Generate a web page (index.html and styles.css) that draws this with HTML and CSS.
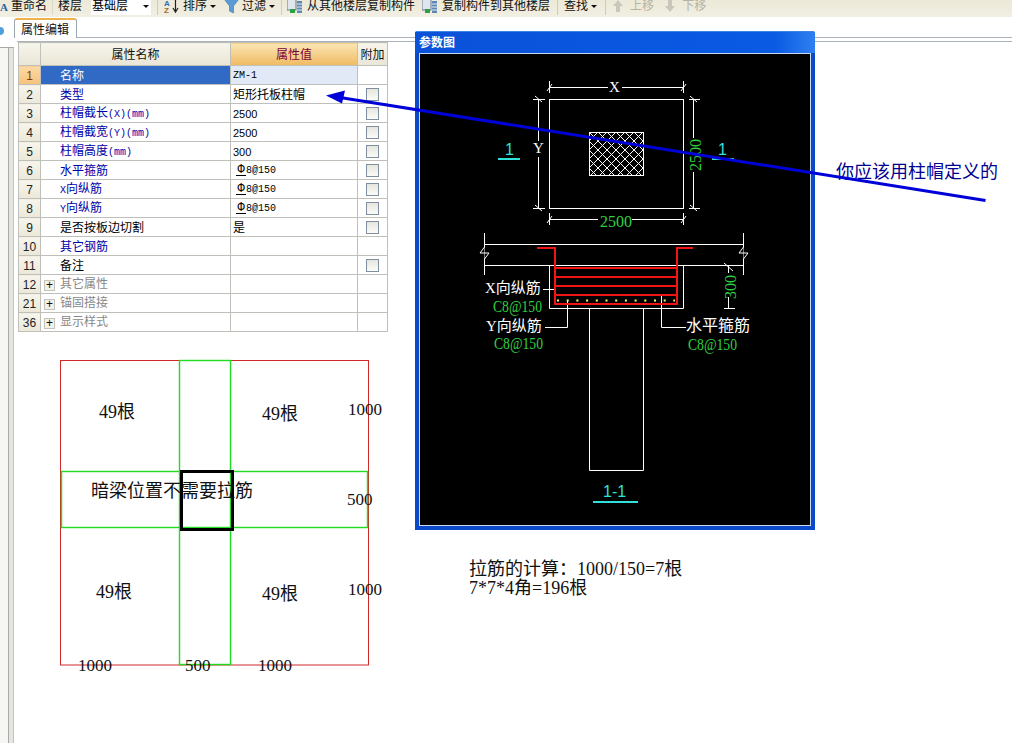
FILE: index.html
```html
<!DOCTYPE html>
<html lang="zh">
<head>
<meta charset="utf-8">
<title>属性编辑</title>
<link rel="stylesheet" href="styles.css">
</head>
<body>
<div class="toolbar">
  <svg class="ico ico-rename" width="10" height="14" viewBox="0 0 10 14"><text x="0" y="12" class="ico-a">A</text></svg>
  <span class="tb tb-rename">重命名</span>
  <span class="sep sep-a"></span>
  <span class="tb">楼层</span>
  <span class="combo"><span>基础层</span><i class="caret"></i></span>
  <span class="sep"></span>
  <svg class="ico" width="17" height="20" viewBox="0 0 17 20"><text x="1" y="10" class="ico-az az-blue">A</text><text x="1" y="17" class="ico-az az-brown">Z</text><path d="M12.500 3V15M10 12L12.500 16L15 12" fill="none" stroke="#222" stroke-width="1.200"/></svg>
  <span class="tb">排序</span><i class="caret"></i>
  <svg class="ico ico-filter" width="15" height="16" viewBox="0 0 15 16"><path d="M0 1H15L9.500 8V15L5.500 13V8Z" fill="#5b9bd5" stroke="#3d74ad" stroke-width=".6"/></svg>
  <span class="tb">过滤</span><i class="caret"></i>
  <span class="sep sep-c"></span>
  <svg class="ico ico-copy" width="16" height="16" viewBox="0 0 16 16"><rect x="0" y="1" width="9" height="11" fill="#dfe6ee" stroke="#66788c"/><rect x="10" y="3" width="5" height="12" fill="#5f86b5"/><path d="M10 6H15M10 9H15M10 12H15" stroke="#e8eef5"/><rect x="3" y="11" width="5" height="4" fill="#2f9e44"/></svg>
  <span class="tb">从其他楼层复制构件</span>
  <svg class="ico ico-copy ico-copy2" width="16" height="16" viewBox="0 0 16 16"><rect x="0" y="1" width="9" height="11" fill="#dfe6ee" stroke="#66788c"/><rect x="10" y="3" width="5" height="12" fill="#5f86b5"/><path d="M10 6H15M10 9H15M10 12H15" stroke="#e8eef5"/><rect x="3" y="11" width="5" height="4" fill="#2f9e44"/></svg>
  <span class="tb">复制构件到其他楼层</span>
  <span class="sep"></span>
  <span class="tb tb-find">查找</span><i class="caret"></i>
  <span class="sep sep-d"></span>
  <svg class="ico ico-up" width="10" height="12" viewBox="0 0 10 12"><path d="M5 0L10 6H7V12H3V6H0Z" fill="#c9c7bb"/></svg>
  <span class="tb tb-off">上移</span>
  <svg class="ico ico-down" width="10" height="12" viewBox="0 0 10 12"><path d="M5 12L10 6H7V0H3V6H0Z" fill="#c9c7bb"/></svg>
  <span class="tb tb-off">下移</span>
</div>

<div class="main">
  <div class="rail">
    <div class="rail-top"><span class="rail-dot"></span></div>
    <div class="rail-body"></div>
  </div>
  <div class="panel">
    <div class="tabs"><span class="tab">属性编辑</span></div>
    <div class="panel-gap"></div>
    <table class="props">
      <colgroup><col class="c-no"><col class="c-name"><col class="c-val"><col class="c-add"></colgroup>
      <thead>
        <tr><th></th><th>属性名称</th><th class="th-val">属性值</th><th>附加</th></tr>
      </thead>
      <tbody>
        <tr class="sel"><td class="no">1</td><td class="name">名称</td><td class="val mono">ZM-1</td><td></td></tr>
        <tr><td class="no">2</td><td class="name blue">类型</td><td class="val">矩形托板柱帽</td><td><span class="check"></span></td></tr>
        <tr><td class="no">3</td><td class="name blue">柱帽截长<span class="lat">(X)(mm)</span></td><td class="val num">2500</td><td><span class="check"></span></td></tr>
        <tr><td class="no">4</td><td class="name blue">柱帽截宽<span class="lat">(Y)(mm)</span></td><td class="val num">2500</td><td><span class="check"></span></td></tr>
        <tr><td class="no">5</td><td class="name blue">柱帽高度<span class="lat">(mm)</span></td><td class="val num">300</td><td><span class="check"></span></td></tr>
        <tr><td class="no">6</td><td class="name blue">水平箍筋</td><td class="val rebar"><span class="bar">Φ</span>8@150</td><td><span class="check"></span></td></tr>
        <tr><td class="no">7</td><td class="name blue"><span class="lat">X</span>向纵筋</td><td class="val rebar"><span class="bar">Φ</span>8@150</td><td><span class="check"></span></td></tr>
        <tr><td class="no">8</td><td class="name blue"><span class="lat">Y</span>向纵筋</td><td class="val rebar"><span class="bar">Φ</span>8@150</td><td><span class="check"></span></td></tr>
        <tr><td class="no">9</td><td class="name">是否按板边切割</td><td class="val">是</td><td><span class="check"></span></td></tr>
        <tr><td class="no">10</td><td class="name blue">其它钢筋</td><td class="val"></td><td></td></tr>
        <tr><td class="no">11</td><td class="name">备注</td><td class="val"></td><td><span class="check"></span></td></tr>
        <tr><td class="no">12</td><td class="name group"><span class="plus">+</span>其它属性</td><td class="val"></td><td></td></tr>
        <tr><td class="no">21</td><td class="name group"><span class="plus">+</span>锚固搭接</td><td class="val"></td><td></td></tr>
        <tr><td class="no">36</td><td class="name group"><span class="plus">+</span>显示样式</td><td class="val"></td><td></td></tr>
      </tbody>
    </table>
  </div>
</div>

<svg class="plan" width="350" height="330" viewBox="40 350 350 330">
  <rect x="60.500" y="360.500" width="308" height="304.500" fill="none" stroke="#d02828"/>
  <rect x="179.500" y="360.500" width="51" height="304" fill="none" stroke="#20dc20" stroke-width="1.400"/>
  <rect x="61.500" y="471.500" width="306" height="56" fill="none" stroke="#20dc20" stroke-width="1.400"/>
  <rect x="181.500" y="471.500" width="51" height="58" fill="none" stroke="#000" stroke-width="3"/>
  <text class="pt" x="99" y="418">49根</text>
  <text class="pt" x="262" y="420">49根</text>
  <text class="pt" x="96" y="598">49根</text>
  <text class="pt" x="262" y="600">49根</text>
  <text class="pt" x="91" y="497">暗梁位置不需要拉筋</text>
  <text class="pn" x="348" y="415">1000</text>
  <text class="pn" x="347" y="505">500</text>
  <text class="pn" x="348" y="595">1000</text>
  <text class="pn" x="78" y="671">1000</text>
  <text class="pn" x="185" y="671">500</text>
  <text class="pn" x="258" y="671">1000</text>
</svg>

<div class="window">
  <div class="win-title">参数图</div>
  <div class="win-body">
    <svg class="cad" width="390" height="472" viewBox="420 53 390 472">
      <defs>
        <pattern id="hatch" x="589" y="131" width="9" height="9" patternUnits="userSpaceOnUse">
          <path d="M0 0L9 9M9 0L0 9" stroke="#fff" stroke-width="1"/>
        </pattern>
      </defs>
      <g fill="none" stroke="#fff">
        <rect x="549.500" y="98.500" width="134" height="109"/>
        <rect x="589.500" y="131.500" width="54" height="43" fill="url(#hatch)"/>
        <path d="M549.500 86.500H608M622 86.500H683.500M549.500 80V92M683.500 80V92M547 90L552 83M681 90L686 83"/>
        <path d="M538.500 98.500V140M538.500 156V207.500M533 98.500H545M533 207.500H545M535 95L542 101M535 204L542 210"/>
        <path d="M693.500 98.500V137M693.500 171V207.500M689 98.500H700M689 207.500H700M690 95L697 101M690 204L697 210"/>
        <path d="M549.500 218.500H598M632 218.500H683.500M549.500 212V224M683.500 212V224M547 222L552 215M681 222L686 215"/>
        <path d="M484.500 232V274M743.500 232V274M484 243.500H744M484 264.500H744"/>
        <path d="M484.500 246L480 252L489 252L484.500 258M743.500 246L739 252L748 252L743.500 258" fill="#000"/>
        <path d="M549.500 264.500V307.500H683.500V264.500M589.500 307.500V469.500H643.500V307.500"/>
        <path d="M543 288.500H555M545 326.500H567.500V299M661.500 293V326.500H686"/>
        <path d="M728.500 264.500V272M728.500 296V307.500M724 307.500H735M724 262L733 270"/>
      </g>
      <g fill="none" stroke="#f01414" stroke-width="2">
        <path d="M537 247H555V303H677V247H693"/>
        <path d="M555 267H677M555 276H677M555 285H677M555 294H677"/>
      </g>
      <path d="M557 299.500H675" stroke="#ffff66" stroke-width="2" stroke-dasharray="2 7.700" fill="none"/>
      <g fill="none" stroke="#30e0d8" stroke-width="2">
        <path d="M498 158H520M712 158H734M593 501H638"/>
      </g>
      <text class="cw" x="609" y="91">X</text>
      <text class="cw" x="533" y="152">Y</text>
      <text class="cc" x="505" y="154">1</text>
      <text class="cc" x="718" y="154">1</text>
      <text class="cg" x="600" y="226">2500</text>
      <text class="cg" transform="translate(701 170) rotate(-90)" x="0" y="0">2500</text>
      <text class="cg" transform="translate(736 298) rotate(-90)" x="0" y="0">300</text>
      <text class="cl" x="485" y="292">X向纵筋</text>
      <text class="cg" x="493" y="311" textLength="49" lengthAdjust="spacingAndGlyphs">C8@150</text>
      <text class="cl" x="486" y="330">Y向纵筋</text>
      <text class="cg" x="494" y="348" textLength="49" lengthAdjust="spacingAndGlyphs">C8@150</text>
      <text class="cl-b" x="686" y="330">水平箍筋</text>
      <text class="cg" x="688" y="349" textLength="49" lengthAdjust="spacingAndGlyphs">C8@150</text>
      <text class="cc" x="603" y="496">1-1</text>
    </svg>
  </div>
</div>

<div class="calc">
  <div>拉筋的计算&#xFF1A;1000/150=7根</div>
  <div>7*7*4角=196根</div>
</div>

<div class="note">你应该用柱帽定义的</div>

<svg class="arrow" width="1012" height="743" viewBox="0 0 1012 743">
  <path d="M340 97.500L985.500 200.500" stroke="#0000d8" stroke-width="3" fill="none"/>
  <path d="M326 95.500L345 90.500L342 103.500Z" fill="#0000d8"/>
</svg>
</body>
</html>
```
FILE: styles.css
```css
* { box-sizing: border-box; }
html, body { margin: 0; padding: 0; }
body {
  position: relative;
  width: 1012px;
  height: 743px;
  overflow: hidden;
  background: #fff;
  color: #000;
  font: 12px "Liberation Sans", "Noto Sans CJK SC", sans-serif;
}

/* toolbar */
.toolbar {
  display: flex;
  align-items: center;
  height: 17px;
  padding-bottom: 5px;
  overflow: hidden;
  background: linear-gradient(#ece9d8, #f1efe2);
  white-space: nowrap;
  line-height: 12px;
}
.tb { flex: none; color: #111; }
.tb-rename { margin-left: 1px; }
.tb-find { margin-left: 1px; }
.tb-off { color: #b5b3a6; margin-left: 7px; }
.sep { flex: none; width: 1px; height: 17px; margin: 0 5px 0 7px; background: #cfccb8; }
.sep-a { margin: 0 5px; background: #ddd9c6; }
.sep-c { margin-left: 0; }
.sep-d { margin-left: 2px; }
.combo {
  display: flex;
  align-items: center;
  justify-content: space-between;
  width: 60px;
  height: 17px;
  margin-left: 9px;
  padding-left: 1px;
  background: #fff;
  flex: none;
}
.combo .caret { margin-right: 2px; }
.combo + .sep { margin-left: 6px; }
.caret {
  flex: none;
  width: 0;
  height: 0;
  margin: 0 6px 0 3px;
  border: 3px solid transparent;
  border-top: 3px solid #111;
  border-bottom: 0;
}
.ico { flex: none; margin-right: 3px; }
.ico-rename { margin-right: 0; }
.ico-filter { margin-left: 2px; }
.ico-copy { margin-right: 4px; }
.ico-copy2 { margin-left: 7px; }
.ico-up { margin-left: 2px; margin-right: 0; }
.ico-down { margin-left: 11px; margin-right: 0; }
.ico-a { font: bold 11px "Liberation Serif", serif; fill: #2b5fa8; }
.ico-az { font: bold 8px "Liberation Sans", sans-serif; }
.az-blue { fill: #3a6cb5; }
.az-brown { fill: #a5692c; }

/* main */
.main { display: flex; height: 726px; }
.rail { flex: none; width: 14px; display: flex; flex-direction: column; }
.rail-top { height: 30px; padding: 9px 0 0; }
.rail-dot {
  display: block;
  width: 4px;
  height: 8px;
  margin-top: 1px;
  border-radius: 0 4px 4px 0;
  background: #4e9fd8;
}
.rail-body {
  flex: 1;
  border-top: 1px solid #a8a8a0;
  background: linear-gradient(90deg, #f6f6f4 8px, #a8aaa4 8px, #a8aaa4 9px, #e6e6e0 9px, #e6e6e0 13px, #c4c4bc 13px);
}
.panel { flex: 1; min-width: 0; }
.tabs {
  display: flex;
  align-items: flex-end;
  height: 21px;
  padding-top: 1px;
  border-bottom: 1px solid #a9b2ba;
  position: relative;
}
.tab {
  display: block;
  width: 63px;
  height: 20px;
  margin-bottom: -1px;
  padding: 2px 0 0 6px;
  line-height: 16px;
  background: #fff;
  border: 1px solid #9aa5b0;
  border-top: 2px solid #eeb24c;
  border-bottom: 0;
  border-radius: 3px 3px 0 0;
  color: #111;
}
.panel-gap { height: 4px; border-bottom: 1px solid #a9b2ba; margin-left: 3px; }

/* table */
.props {
  margin-left: 4px;
  border-collapse: collapse;
  table-layout: fixed;
  width: 369px;
}
.c-no { width: 22px; }
.c-name { width: 190px; }
.c-val { width: 127px; }
.c-add { width: 30px; }
.props th, .props td {
  height: 19px;
  padding: 1px 0 0;
  border: 1px solid #c0c0ba;
  font-weight: 400;
  line-height: 12px;
  overflow: hidden;
  white-space: nowrap;
}
.props th {
  height: 23px;
  text-align: center;
  color: #111;
  background: linear-gradient(#f7f5ec, #e9e6d6);
}
.props th.th-val {
  color: #7a0038;
  background: linear-gradient(#fbe6b4, #f0ba62);
}
.no {
  text-align: center;
  color: #222;
  background: linear-gradient(#f7f5ec, #ebe8d9);
}
.props .name { padding-left: 19px; }
.blue { color: #0000a8; }
.lat { font: 10px "Liberation Mono", monospace; }
.props .val { padding-left: 2px; }
.props .mono { font: 10px "Liberation Mono", monospace; }
.props .num { font-size: 11px; }
.props .rebar { padding-left: 5px; font: 10px "Liberation Mono", monospace; }
.bar {
  display: inline-block;
  width: 10px;
  margin-right: 0;
  font-size: 12px;
  line-height: 10px;
  border-bottom: 1px solid #000;
  text-align: center;
}
.sel .no { background: linear-gradient(#fbd9a6, #f6c27c); color: #8a3a00; }
.sel .name { background: #316ac5; color: #fff; }
.sel .val { background: #e0e9f5; }
.check {
  display: block;
  width: 13px;
  height: 13px;
  margin-left: 8px;
  border: 1px solid #7f8fa0;
  background: linear-gradient(#e6e6df, #fbfbf8);
}
.props .group { padding-left: 3px; color: #888; }
.plus {
  display: inline-block;
  width: 11px;
  height: 11px;
  margin-right: 5px;
  border: 1px solid #c4c4bc;
  background: #f2f2ea;
  color: #111;
  font: 12px/9px "Liberation Sans", sans-serif;
  text-align: center;
  vertical-align: -1px;
}

/* free-canvas overlays */
.plan { position: absolute; left: 40px; top: 350px; }
.pt { font: 18px "Liberation Serif", "Noto Sans CJK SC", serif; fill: #111; }
.pn { font: 17px "Liberation Serif", serif; fill: #111; }

.window {
  position: absolute;
  left: 415px;
  top: 31px;
  width: 400px;
  height: 499px;
  display: flex;
  flex-direction: column;
  padding: 0 4px 4px;
  background: #0a49c8;
  border-radius: 2px 2px 0 0;
  border-top: 1px solid #3a86e8;
}
.win-title {
  flex: none;
  height: 21px;
  margin: 0 -4px;
  padding-left: 4px;
  line-height: 22px;
  font-weight: 700;
  color: #fff;
  background: linear-gradient(90deg, #0a52d8, #0a5ae4 90%, #2f80f0);
}
.win-body {
  flex: 1;
  min-height: 0;
  border: 1px solid #c8d8f0;
  background: #000;
}
.cad { display: block; }
.cw { font: 15px "Liberation Serif", serif; fill: #fff; }
.cc { font: 16px "Liberation Sans", sans-serif; fill: #30e0d8; }
.cg { font: 16px "Liberation Serif", serif; fill: #30d040; }
.cl { font: 15px "Liberation Serif", "Noto Sans CJK SC", serif; fill: #fff; }
.cl-b { font: 16px "Noto Sans CJK SC", sans-serif; fill: #fff; }

.calc {
  position: absolute;
  left: 469px;
  top: 560px;
  font: 18px/19px "Liberation Serif", "Noto Sans CJK SC", serif;
  color: #111;
  white-space: nowrap;
}
.note {
  position: absolute;
  left: 836px;
  top: 160px;
  font: 18px/20px "Noto Sans CJK SC", sans-serif;
  color: #000090;
  white-space: nowrap;
}
.arrow { position: absolute; left: 0; top: 0; pointer-events: none; }
```
